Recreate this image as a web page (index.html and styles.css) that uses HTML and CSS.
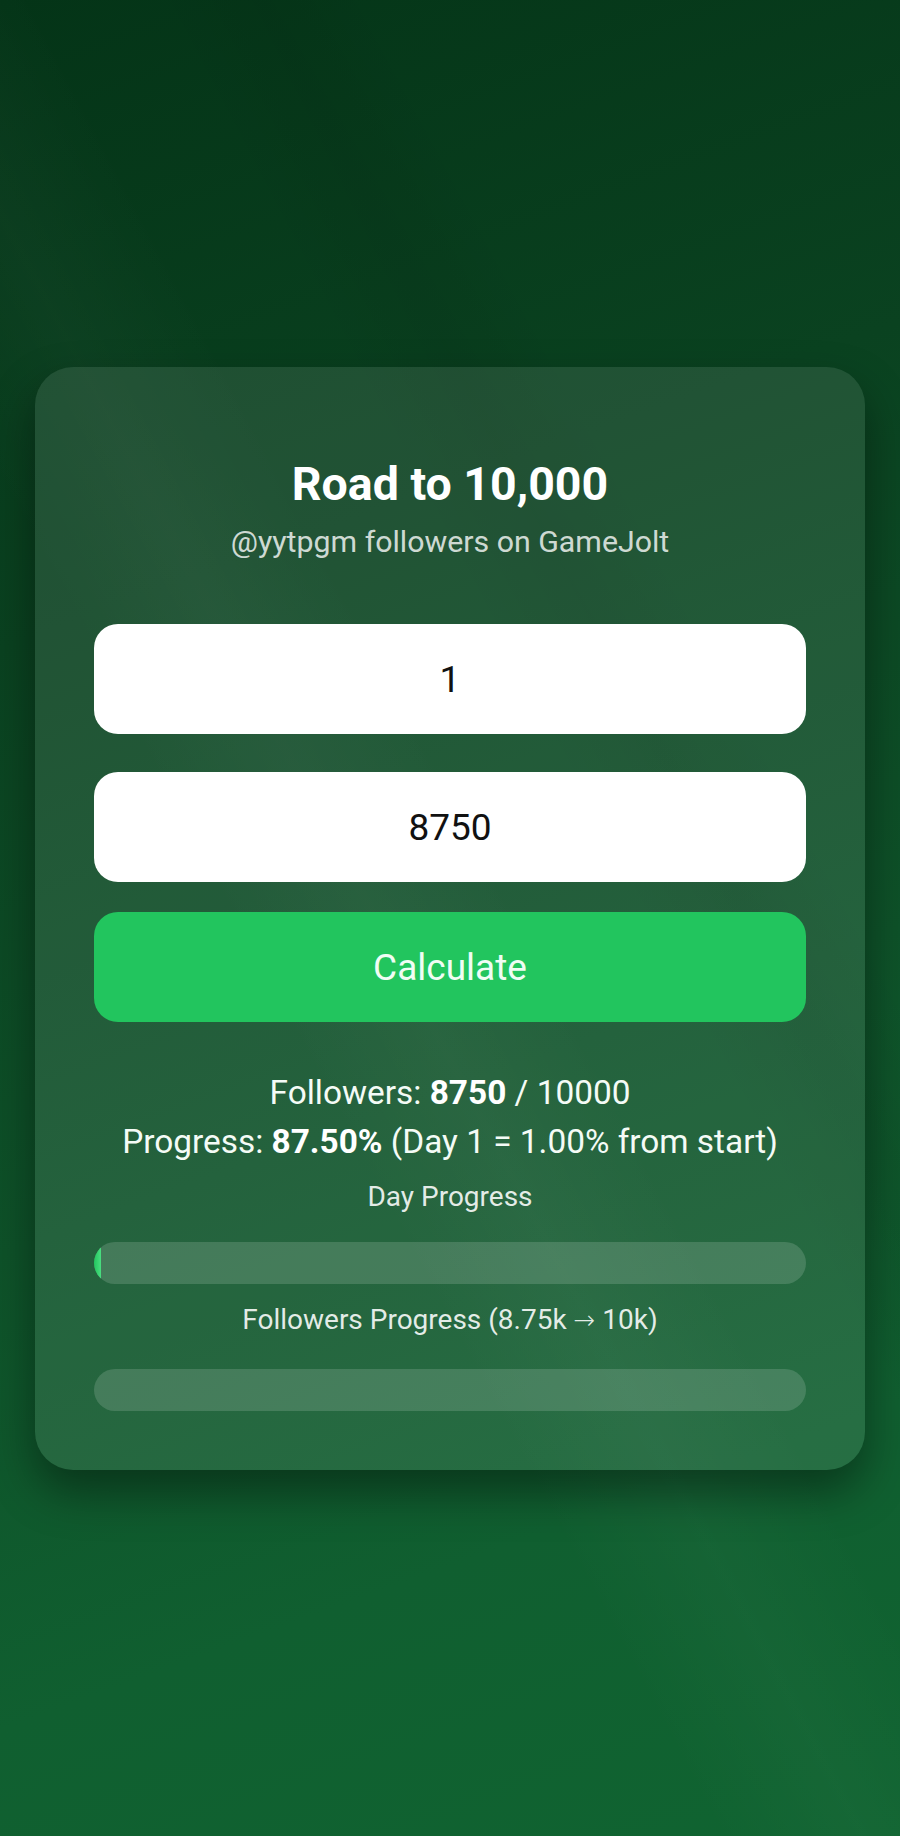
FILE: index.html
```html
<!DOCTYPE html>
<html lang="en">
  <head>
    <meta charset="UTF-8" />
    <meta name="viewport" content="width=device-width, initial-scale=1.0" />
    <title>Road to 10,000</title>
    <link rel="stylesheet" href="styles.css">
  </head>
  <body>
    <main class="page">
      <!-- Calculator card -->
      <section class="card">
        <h1 class="title">Road to 10,000</h1>
        <p class="subtitle">@yytpgm followers on GameJolt</p>

        <input class="field" id="day" type="number" value="1" />
        <input class="field field-second" id="followers" type="number" value="8750" />
        <button class="calc-btn" id="calculate">Calculate</button>

        <div class="result">
          <p>Followers: <strong>8750</strong> / 10000</p>
          <p>Progress: <strong>87.50%</strong> (Day 1 = 1.00% from start)</p>
        </div>

        <p class="bar-label">Day Progress</p>
        <div class="bar"><div class="bar-fill" style="width: 1%"></div></div>

        <p class="bar-label bar-label-second">Followers Progress (8.75k <span class="arrow">→</span> 10k)</p>
        <div class="bar bar-second"><div class="bar-fill" style="width: 0%"></div></div>
      </section>
    </main>
  </body>
</html>
```

FILE: styles.css
```css
* {
  box-sizing: border-box;
}

body {
  margin: 0;
  min-height: 100vh;
  font-family: Roboto, "Noto Sans", Arial, sans-serif;
  color: #fff;
  background:
    linear-gradient(62deg, transparent 38%, rgba(255, 255, 255, 0.025) 46%, transparent 54%),
    linear-gradient(62deg, transparent 60%, rgba(0, 0, 0, 0.05) 66%, transparent 72%),
    linear-gradient(160deg, #043417 0%, #0a4220 30%, #0e5229 58%, #105f30 80%, #106431 100%);
}

.page {
  min-height: 100vh;
  display: flex;
  align-items: center;
  justify-content: center;
  padding: 1px 35px 0;
}

.card {
  width: 100%;
  max-width: 830px;
  padding: 90px 59px 59px;
  border-radius: 38px;
  background: rgba(255, 255, 255, 0.095);
  box-shadow: 0 22px 45px rgba(0, 0, 0, 0.4);
  text-align: center;
}

.title {
  margin: 0;
  font-size: 46.5px;
  line-height: 54px;
  font-weight: 700;
}

.subtitle {
  margin: 13px 0 0;
  font-size: 30.3px;
  line-height: 36px;
  color: rgba(255, 255, 255, 0.8);
}

.field {
  display: block;
  width: 100%;
  height: 110px;
  margin-top: 64px;
  border: none;
  border-radius: 24px;
  background: #fff;
  color: #111;
  font-family: inherit;
  font-size: 37px;
  text-align: center;
  outline: none;
  -moz-appearance: textfield;
}

.field::-webkit-outer-spin-button,
.field::-webkit-inner-spin-button {
  -webkit-appearance: none;
  margin: 0;
}

.field-second {
  margin-top: 38px;
}

.calc-btn {
  display: block;
  width: 100%;
  height: 110px;
  margin-top: 30px;
  border: none;
  border-radius: 24px;
  background: #22c55e;
  color: #f0fdf4;
  font-family: inherit;
  font-size: 37px;
  cursor: pointer;
}

.result {
  margin-top: 46px;
}

.result p {
  margin: 0;
  font-size: 33.4px;
  line-height: 49px;
  color: #f4fbf6;
}

.result strong {
  font-weight: 700;
  color: #fff;
}

.bar-label {
  margin: 14px 0 0;
  font-size: 28px;
  line-height: 34px;
  color: rgba(255, 255, 255, 0.88);
}

.bar-label-second {
  margin-top: 19px;
}

.arrow {
  font-family: "DejaVu Sans", sans-serif;
  font-weight: 200;
  font-size: 26px;
  line-height: 1;
}

.bar {
  height: 42px;
  margin-top: 28px;
  border-radius: 21px;
  background: rgba(255, 255, 255, 0.15);
  overflow: hidden;
}

.bar-second {
  margin-top: 32px;
}

.bar-fill {
  height: 100%;
  border-radius: 21px;
  background: linear-gradient(90deg, #22c55e, #4ade80);
}
```
